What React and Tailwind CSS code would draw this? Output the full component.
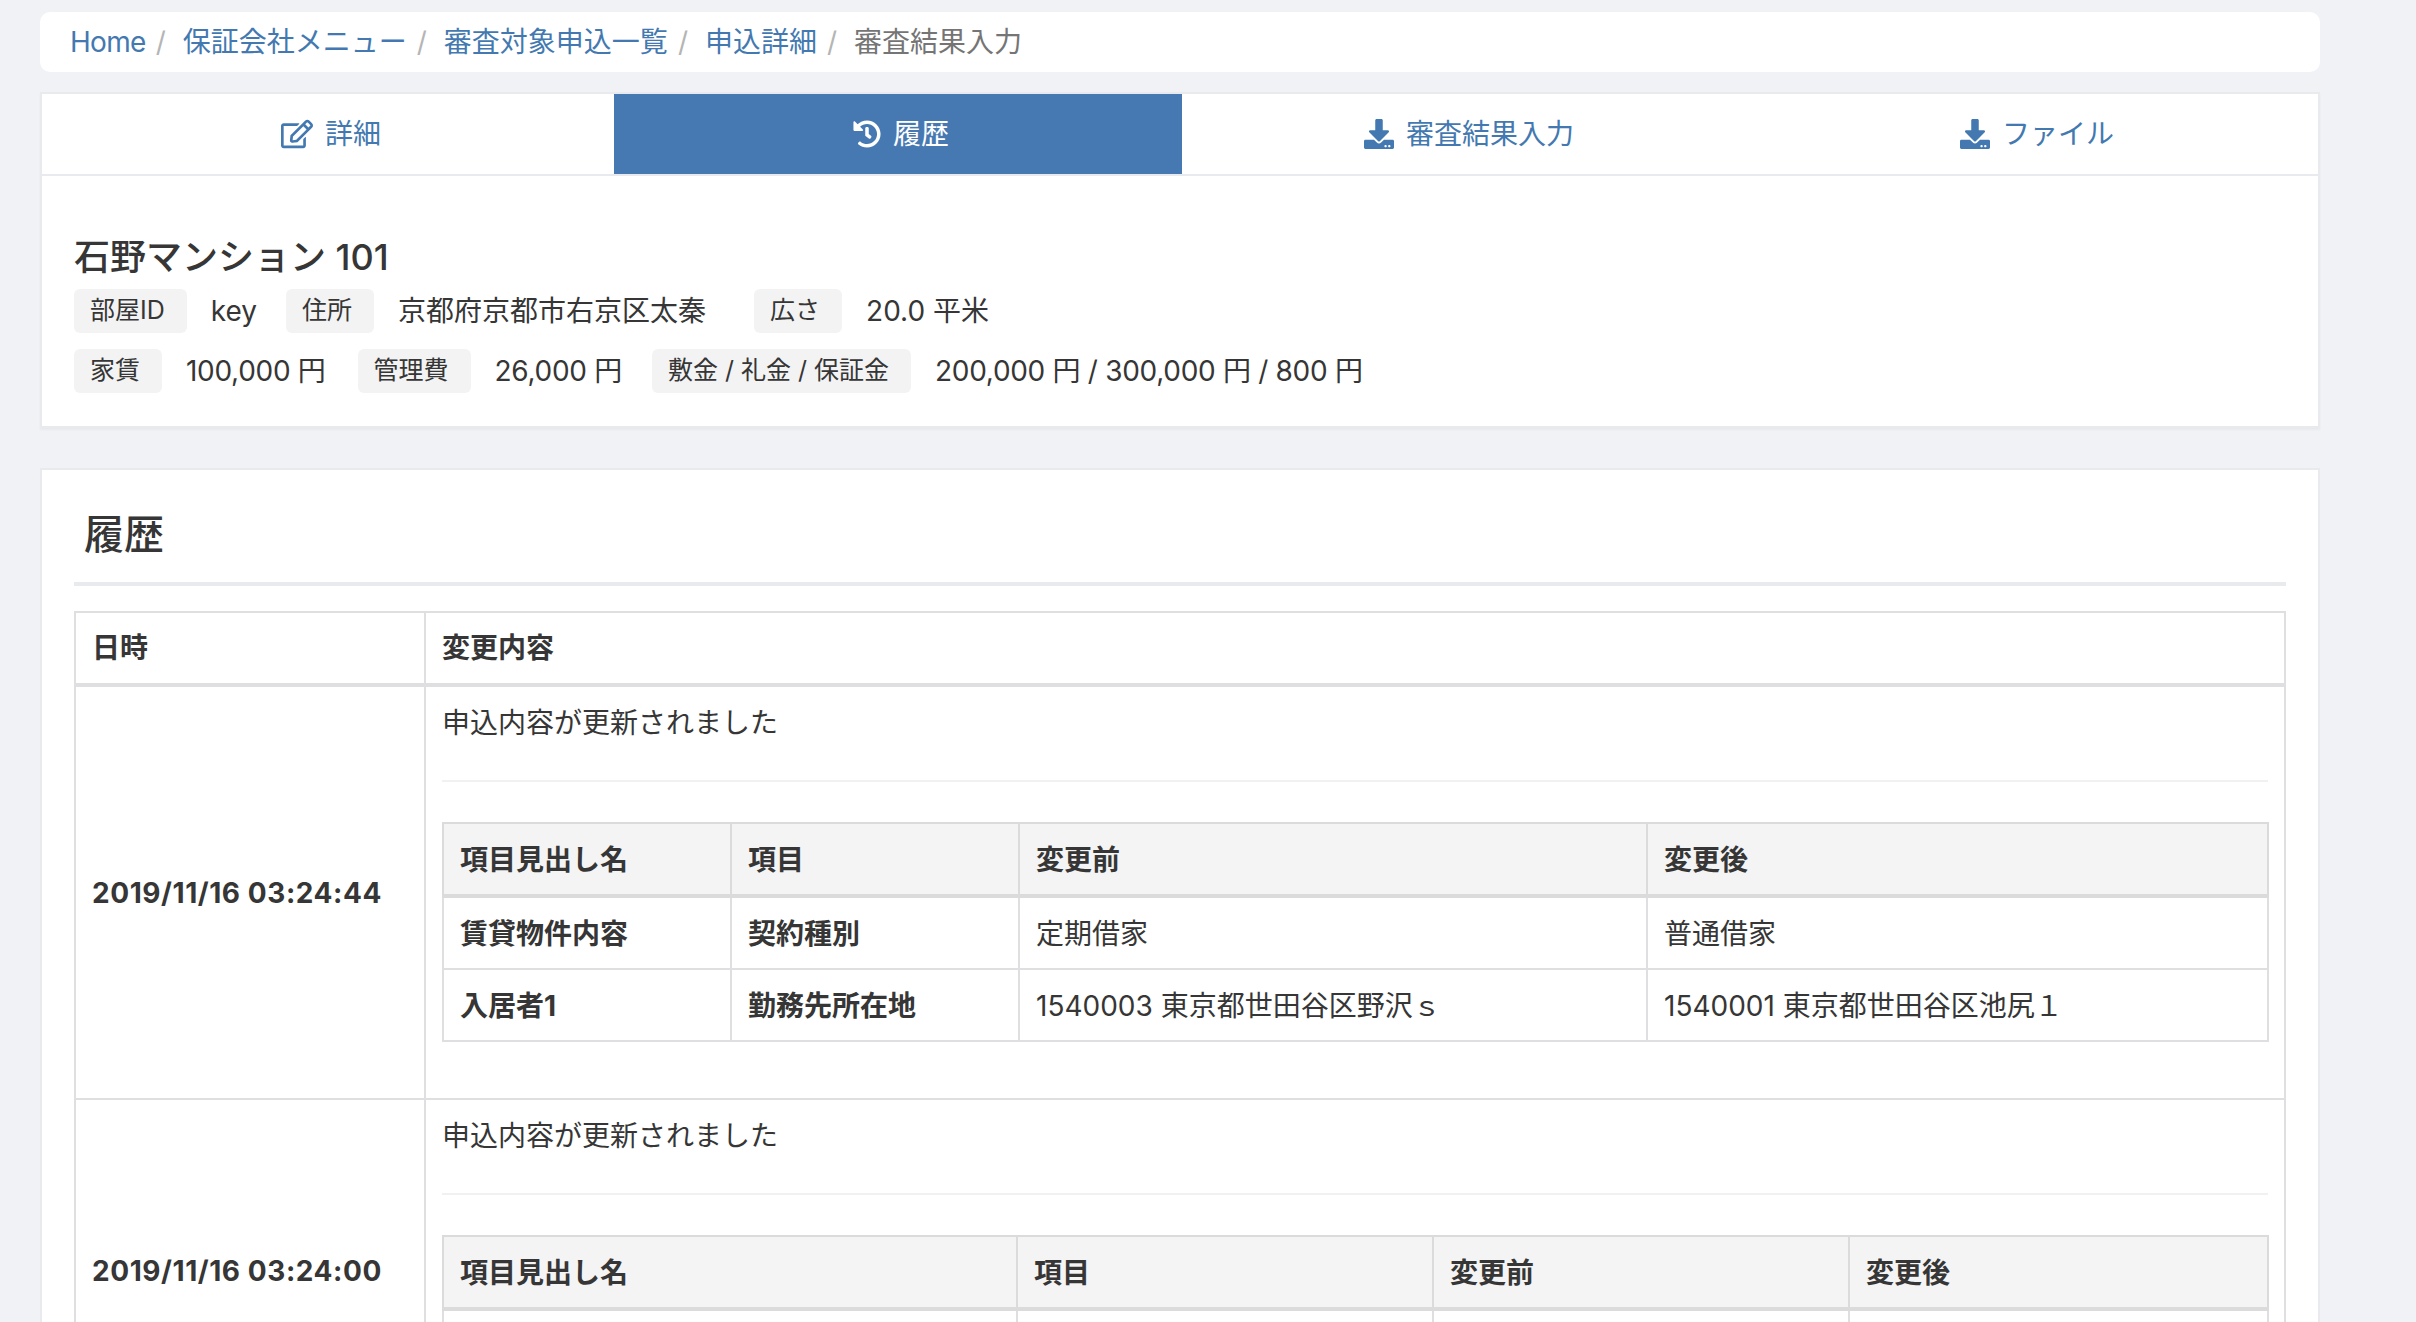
import React from 'react';
import { FaRegEdit, FaHistory, FaDownload } from 'react-icons/fa';

const crumbs = ['保証会社メニュー', '審査対象申込一覧', '申込詳細'];

const tabs = [
    { label: '詳細', icon: FaRegEdit, size: 'w-[32px] h-[32px]' },
    { label: '履歴', icon: FaHistory, size: 'w-[28px] h-[28px]', active: true },
    { label: '審査結果入力', icon: FaDownload, size: 'w-[30px] h-[30px]' },
    { label: 'ファイル', icon: FaDownload, size: 'w-[30px] h-[30px]' },
];

const historyItems = [
    {
        date: '2019/11/16 03:24:44',
        cols: ['w-[288px]', 'w-[288px]', 'w-[628px]', 'w-[621px]'],
        bottom: 'pb-[56px]',
        rows: [
            ['賃貸物件内容', '契約種別', '定期借家', '普通借家'],
            ['入居者1', '勤務先所在地', '1540003 東京都世田谷区野沢ｓ', '1540001 東京都世田谷区池尻１'],
        ],
    },
    {
        date: '2019/11/16 03:24:00',
        cols: ['w-[574px]', 'w-[416px]', 'w-[416px]', 'w-[419px]'],
        bottom: 'pb-[60px]',
        rows: [['', '', '', '']],
    },
];

function Tag({ children }) {
    return (
        <span className="h-[44px] pl-[16px] pr-[22px] rounded-[6px] bg-[#f3f3f4] text-[25px] leading-[42px] whitespace-nowrap">
            {children}
        </span>
    );
}

function Field({ label, value, className, tight }) {
    return (
        <div className={`flex items-center ${className || ''}`}>
            <Tag>{label}</Tag>
            <span className={`ml-[24px] whitespace-nowrap ${tight ? 'tracking-[-0.3px]' : ''}`}>{value}</span>
        </div>
    );
}

function HistoryRow({ item }) {
    return (
        <tr>
            <td className="border-2 border-[#dfdfe1] px-[16px] align-middle font-bold tracking-[0.57px] whitespace-nowrap">{item.date}</td>
            <td className={`border-2 border-[#dfdfe1] px-[16px] pt-[15px] align-top ${item.bottom}`}>
                <p className="h-[42px]">申込内容が更新されました</p>
                <hr className="mt-[36px] mb-[40px] border-0 h-[2px] bg-[#f1f1f2]" />
                <table className="table-fixed border-collapse w-[1825px]">
                    <colgroup>
                        {item.cols.map((col, i) => <col key={i} className={col} />)}
                    </colgroup>
                    <thead>
                        <tr className="bg-[#f4f4f5]">
                            {['項目見出し名', '項目', '変更前', '変更後'].map(h => (
                                <th key={h} className="border-2 border-b-4 border-[#dbdbdc] px-[16px] pt-[15px] pb-[13px] text-left font-bold">{h}</th>
                            ))}
                        </tr>
                    </thead>
                    <tbody>
                        {item.rows.map((row, i) => (
                            <tr key={i} className="h-[72px]">
                                {row.map((cell, j) => (
                                    <td key={j} className={`border-2 border-[#dfdfe1] px-[16px] pt-[15px] pb-[13px] ${j < 2 ? 'font-bold' : ''}`}>{cell}</td>
                                ))}
                            </tr>
                        ))}
                    </tbody>
                </table>
            </td>
        </tr>
    );
}

export default function App() {
    return (
        <div className="h-[1322px] overflow-hidden bg-[#f0f2f6] pt-[12px] px-[40px] text-[28px] leading-[42px] text-[#363636] [font-family:Inter,'Noto_Sans_CJK_JP',sans-serif]">
            {/* Breadcrumb */}
            <nav className="flex items-center h-[60px] w-[2280px] pl-[30px] rounded-[10px] bg-white">
                <a className="text-[#4379b0] tracking-[-0.7px] whitespace-nowrap">Home</a>
                <span className="ml-[10px] mr-[17px] text-[#b5b5b5]">/</span>
                {crumbs.map(c => (
                    <React.Fragment key={c}>
                        <a className="text-[#4379b0] whitespace-nowrap">{c}</a>
                        <span className="ml-[10px] mr-[17px] text-[#b5b5b5]">/</span>
                    </React.Fragment>
                ))}
                <span className="text-[#757575] whitespace-nowrap">審査結果入力</span>
            </nav>

            {/* Tabs and room summary */}
            <section className="mt-[20px] w-[2280px] bg-white border-2 border-[#e9eaee] shadow-[0_2px_2px_rgba(0,0,0,0.04)]">
                <div className="grid grid-cols-[572px_568px_568px_1fr] h-[82px] border-b-2 border-[#e9eaee]">
                    {tabs.map(({ label, icon: Icon, size, active }) => (
                        <div
                            key={label}
                            className={`flex items-center justify-center gap-[12px] h-[80px] pl-[6px] ${active ? 'bg-[#4679b2] text-white' : 'text-[#4379b0]'}`}
                        >
                            <Icon className={size} />
                            <span>{label}</span>
                        </div>
                    ))}
                </div>
                <div className="pl-[32px] pt-[57px] pb-[33px]">
                    <h1 className="h-[48px] text-[36px] leading-[48px] font-medium">石野マンション 101</h1>
                    <div className="flex mt-[8px]">
                        <Field label="部屋ID" value="key" className="mr-[29px]" />
                        <Field label="住所" value="京都府京都市右京区太秦" className="mr-[48px]" />
                        <Field label="広さ" value="20.0 平米" />
                    </div>
                    <div className="flex mt-[16px]">
                        <Field label="家賃" value="100,000 円" className="mr-[32px]" tight />
                        <Field label="管理費" value="26,000 円" className="mr-[30px]" tight />
                        <Field label="敷金 / 礼金 / 保証金" value="200,000 円 / 300,000 円 / 800 円" tight />
                    </div>
                </div>
            </section>

            {/* History */}
            <section className="mt-[40px] w-[2280px] bg-white border-2 border-[#e9eaee] px-[32px] pt-[39px]">
                <h2 className="h-[52px] pl-[10px] text-[40px] leading-[52px] font-medium">履歴</h2>
                <hr className="mt-[21px] border-0 h-[4px] bg-[#e9eaee]" />
                <table className="mt-[25px] table-fixed border-collapse w-[2212px]">
                    <colgroup>
                        <col className="w-[350px]" />
                        <col />
                    </colgroup>
                    <thead>
                        <tr>
                            <th className="border-2 border-b-4 border-[#dfdfe1] px-[16px] py-[14px] text-left font-bold">日時</th>
                            <th className="border-2 border-b-4 border-[#dfdfe1] px-[16px] py-[14px] text-left font-bold">変更内容</th>
                        </tr>
                    </thead>
                    <tbody>
                        {historyItems.map(item => <HistoryRow key={item.date} item={item} />)}
                    </tbody>
                </table>
            </section>
        </div>
    );
}
